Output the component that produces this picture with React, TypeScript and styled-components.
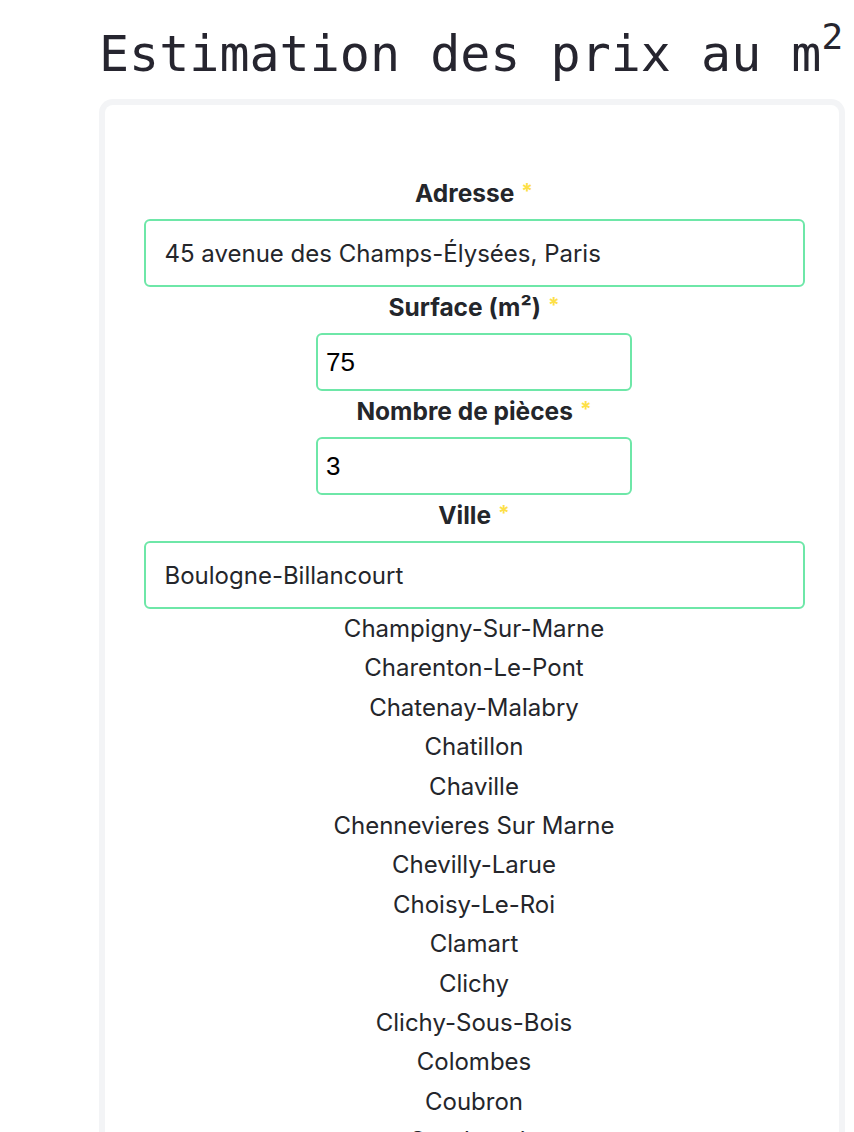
import * as React from "react";
import styled, { createGlobalStyle } from "styled-components";

const GlobalStyle = createGlobalStyle`
  body {
    margin: 0;
    background: #ffffff;
    font-family: Inter, "Noto Sans", sans-serif;
  }
`;

const Page = styled.div`
  padding: 24px 0 0 99px;
  overflow: hidden;
`;

const Title = styled.h1`
  margin: 0 0 15px;
  font-family: "DejaVu Sans Mono", "Liberation Mono", monospace;
  font-size: 50px;
  font-weight: 400;
  line-height: 60px;
  color: #26252f;
  white-space: nowrap;

  sup {
    font-size: 0.72em;
    line-height: 0;
    vertical-align: 0.62em;
  }
`;

const Card = styled.div`
  box-sizing: border-box;
  width: 746px;
  border: 6px solid #f3f4f6;
  border-bottom: none;
  border-radius: 14px 14px 0 0;
  padding: 74px 0 40px 4px;
  display: flex;
  flex-direction: column;
  align-items: center;
`;

const Field = styled.div`
  display: flex;
  flex-direction: column;
  align-items: center;
  margin-bottom: 6px;
`;

const Label = styled.label`
  font-size: 24.5px;
  font-weight: 700;
  line-height: 29px;
  color: #24262b;
  margin-bottom: 11px;
`;

const Required = styled.span`
  color: #fde047;
  font-size: 0.85em;
  line-height: 0;
  vertical-align: 0.15em;
  margin-left: 7px;
`;

const TextInput = styled.input<{ $narrow?: boolean }>`
  box-sizing: border-box;
  width: ${p => (p.$narrow ? "316px" : "661px")};
  height: ${p => (p.$narrow ? "58px" : "68px")};
  border: 2px solid #6ee7a8;
  border-radius: 6px;
  padding: ${p => (p.$narrow ? "0 8px" : "0 19px")};
  font-family: ${p => (p.$narrow ? `"Liberation Sans", Arial, sans-serif` : `Inter, "Noto Sans", sans-serif`)};
  font-size: ${p => (p.$narrow ? "26px" : "24px")};
  color: ${p => (p.$narrow ? "#000000" : "#24262b")};
  background: #ffffff;
  outline: none;
`;

const CityList = styled.ul`
  list-style: none;
  margin: -6px 0 0;
  padding: 0;
  text-align: center;
`;

const CityItem = styled.li`
  font-size: 24px;
  line-height: 39.4px;
  color: #24262b;
`;

const cities = [
  "Champigny-Sur-Marne",
  "Charenton-Le-Pont",
  "Chatenay-Malabry",
  "Chatillon",
  "Chaville",
  "Chennevieres Sur Marne",
  "Chevilly-Larue",
  "Choisy-Le-Roi",
  "Clamart",
  "Clichy",
  "Clichy-Sous-Bois",
  "Colombes",
  "Coubron",
  "Courbevoie",
  "Creteil",
  "Drancy",
];

export default function App() {
  return (
    <Page>
      <GlobalStyle />
      <Title>
        Estimation des prix au m<sup>2</sup>
      </Title>
      <Card>
        <Field>
          <Label>
            Adresse<Required>*</Required>
          </Label>
          <TextInput type="text" defaultValue="45 avenue des Champs-Élysées, Paris" />
        </Field>
        <Field>
          <Label>
            Surface (m²)<Required>*</Required>
          </Label>
          <TextInput $narrow type="text" defaultValue="75" />
        </Field>
        <Field>
          <Label>
            Nombre de pièces<Required>*</Required>
          </Label>
          <TextInput $narrow type="text" defaultValue="3" />
        </Field>
        <Field>
          <Label>
            Ville<Required>*</Required>
          </Label>
          <TextInput type="text" defaultValue="Boulogne-Billancourt" />
        </Field>
        <CityList>
          {cities.map(city => (
            <CityItem key={city}>{city}</CityItem>
          ))}
        </CityList>
      </Card>
    </Page>
  );
}
